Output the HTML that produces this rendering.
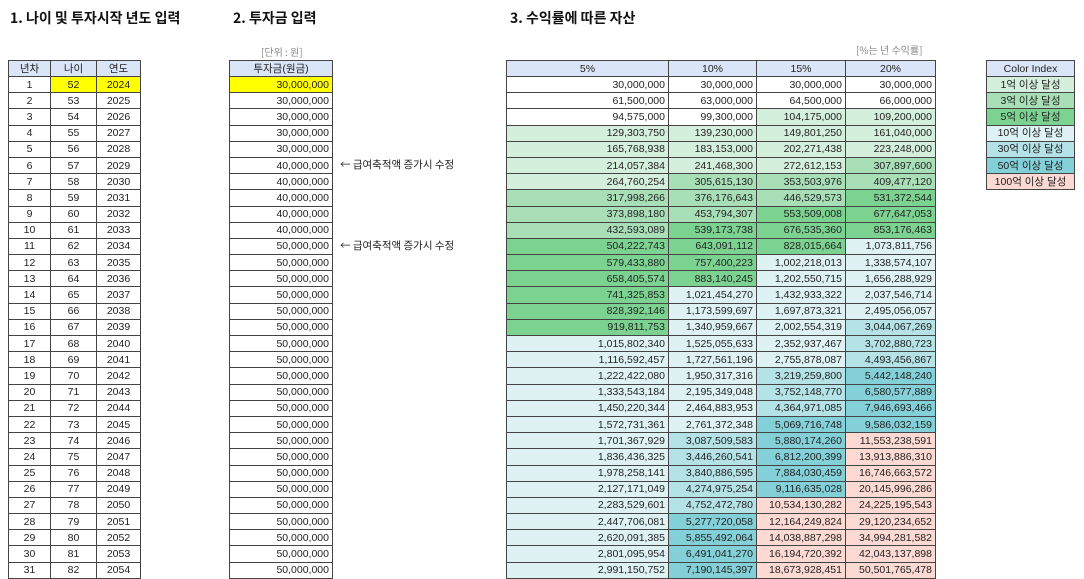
<!DOCTYPE html>
<html><head><meta charset="utf-8">
<style>
*{margin:0;padding:0;box-sizing:border-box}
body{width:1084px;height:578px;background:#fff;position:relative;overflow:hidden;font-family:"Liberation Sans","Noto Sans CJK KR",sans-serif;color:#222}
.t{position:absolute;font-size:14px;font-weight:bold;top:8px;color:#111;font-family:"Noto Sans CJK KR",sans-serif}
.g{position:absolute;font-size:10px;color:#888;font-family:"Noto Sans CJK KR",sans-serif}
.n{position:absolute;font-size:10.5px;color:#222;font-family:"Noto Sans CJK KR",sans-serif}
table{position:absolute;border-collapse:collapse;font-size:10.5px;table-layout:fixed}
td{border:1px solid #444;height:16.2px;padding:0 3px;white-space:nowrap;line-height:14px;text-align:right;overflow:hidden}
tr.h td{background:#dae6f8;text-align:center;height:16px;font-family:"Liberation Sans","Noto Sans CJK KR",sans-serif}
.c td{text-align:center}
.y{background:#ffff00}
.a{background:#d4efdb}.b{background:#a9dfb7}.d{background:#7cd391}
.e{background:#def2f4}.f{background:#b4e2e6}.k{background:#84d0d8}.p{background:#fcd9d3}
</style></head><body>
<div class="t" style="left:10px">1. 나이 및 투자시작 년도 입력</div>
<div class="t" style="left:233px">2. 투자금 입력</div>
<div class="t" style="left:510px">3. 수익률에 따른 자산</div>
<div class="g" style="left:261px;top:44px">[단위 : 원]</div>
<div class="g" style="left:856px;top:42px">[%는 년 수익률]</div>
<div class="n" style="left:340px;top:157px">← 급여축적액 증가시 수정</div>
<div class="n" style="left:340px;top:238px">← 급여축적액 증가시 수정</div>

<table class="c" style="left:8px;top:60px;width:132px">
<col style="width:42px"><col style="width:46px"><col style="width:44px">
<tr class="h"><td>년차</td><td>나이</td><td>연도</td></tr>
<tr><td>1</td><td class="y">52</td><td class="y">2024</td></tr>
<tr><td>2</td><td>53</td><td>2025</td></tr><tr><td>3</td><td>54</td><td>2026</td></tr>
<tr><td>4</td><td>55</td><td>2027</td></tr><tr><td>5</td><td>56</td><td>2028</td></tr>
<tr><td>6</td><td>57</td><td>2029</td></tr><tr><td>7</td><td>58</td><td>2030</td></tr>
<tr><td>8</td><td>59</td><td>2031</td></tr><tr><td>9</td><td>60</td><td>2032</td></tr>
<tr><td>10</td><td>61</td><td>2033</td></tr><tr><td>11</td><td>62</td><td>2034</td></tr>
<tr><td>12</td><td>63</td><td>2035</td></tr><tr><td>13</td><td>64</td><td>2036</td></tr>
<tr><td>14</td><td>65</td><td>2037</td></tr><tr><td>15</td><td>66</td><td>2038</td></tr>
<tr><td>16</td><td>67</td><td>2039</td></tr><tr><td>17</td><td>68</td><td>2040</td></tr>
<tr><td>18</td><td>69</td><td>2041</td></tr><tr><td>19</td><td>70</td><td>2042</td></tr>
<tr><td>20</td><td>71</td><td>2043</td></tr><tr><td>21</td><td>72</td><td>2044</td></tr>
<tr><td>22</td><td>73</td><td>2045</td></tr><tr><td>23</td><td>74</td><td>2046</td></tr>
<tr><td>24</td><td>75</td><td>2047</td></tr><tr><td>25</td><td>76</td><td>2048</td></tr>
<tr><td>26</td><td>77</td><td>2049</td></tr><tr><td>27</td><td>78</td><td>2050</td></tr>
<tr><td>28</td><td>79</td><td>2051</td></tr><tr><td>29</td><td>80</td><td>2052</td></tr>
<tr><td>30</td><td>81</td><td>2053</td></tr><tr><td>31</td><td>82</td><td>2054</td></tr>
</table>

<table style="left:229px;top:60px;width:104px">
<tr class="h"><td>투자금(원금)</td></tr>
<tr><td class="y">30,000,000</td></tr>
<tr><td>30,000,000</td></tr><tr><td>30,000,000</td></tr><tr><td>30,000,000</td></tr><tr><td>30,000,000</td></tr>
<tr><td>40,000,000</td></tr><tr><td>40,000,000</td></tr><tr><td>40,000,000</td></tr><tr><td>40,000,000</td></tr><tr><td>40,000,000</td></tr>
<tr><td>50,000,000</td></tr><tr><td>50,000,000</td></tr><tr><td>50,000,000</td></tr><tr><td>50,000,000</td></tr><tr><td>50,000,000</td></tr>
<tr><td>50,000,000</td></tr><tr><td>50,000,000</td></tr><tr><td>50,000,000</td></tr><tr><td>50,000,000</td></tr><tr><td>50,000,000</td></tr>
<tr><td>50,000,000</td></tr><tr><td>50,000,000</td></tr><tr><td>50,000,000</td></tr><tr><td>50,000,000</td></tr><tr><td>50,000,000</td></tr>
<tr><td>50,000,000</td></tr><tr><td>50,000,000</td></tr><tr><td>50,000,000</td></tr><tr><td>50,000,000</td></tr><tr><td>50,000,000</td></tr>
<tr><td>50,000,000</td></tr>
</table>

<table style="left:506px;top:60px;width:429px">
<col style="width:162px"><col style="width:88px"><col style="width:89px"><col style="width:90px">
<tr class="h"><td>5%</td><td>10%</td><td>15%</td><td>20%</td></tr>
<tr><td>30,000,000</td><td>30,000,000</td><td>30,000,000</td><td>30,000,000</td></tr>
<tr><td>61,500,000</td><td>63,000,000</td><td>64,500,000</td><td>66,000,000</td></tr>
<tr><td>94,575,000</td><td>99,300,000</td><td class="a">104,175,000</td><td class="a">109,200,000</td></tr>
<tr><td class="a">129,303,750</td><td class="a">139,230,000</td><td class="a">149,801,250</td><td class="a">161,040,000</td></tr>
<tr><td class="a">165,768,938</td><td class="a">183,153,000</td><td class="a">202,271,438</td><td class="a">223,248,000</td></tr>
<tr><td class="a">214,057,384</td><td class="a">241,468,300</td><td class="a">272,612,153</td><td class="b">307,897,600</td></tr>
<tr><td class="a">264,760,254</td><td class="b">305,615,130</td><td class="b">353,503,976</td><td class="b">409,477,120</td></tr>
<tr><td class="b">317,998,266</td><td class="b">376,176,643</td><td class="b">446,529,573</td><td class="d">531,372,544</td></tr>
<tr><td class="b">373,898,180</td><td class="b">453,794,307</td><td class="d">553,509,008</td><td class="d">677,647,053</td></tr>
<tr><td class="b">432,593,089</td><td class="d">539,173,738</td><td class="d">676,535,360</td><td class="d">853,176,463</td></tr>
<tr><td class="d">504,222,743</td><td class="d">643,091,112</td><td class="d">828,015,664</td><td class="e">1,073,811,756</td></tr>
<tr><td class="d">579,433,880</td><td class="d">757,400,223</td><td class="e">1,002,218,013</td><td class="e">1,338,574,107</td></tr>
<tr><td class="d">658,405,574</td><td class="d">883,140,245</td><td class="e">1,202,550,715</td><td class="e">1,656,288,929</td></tr>
<tr><td class="d">741,325,853</td><td class="e">1,021,454,270</td><td class="e">1,432,933,322</td><td class="e">2,037,546,714</td></tr>
<tr><td class="d">828,392,146</td><td class="e">1,173,599,697</td><td class="e">1,697,873,321</td><td class="e">2,495,056,057</td></tr>
<tr><td class="d">919,811,753</td><td class="e">1,340,959,667</td><td class="e">2,002,554,319</td><td class="f">3,044,067,269</td></tr>
<tr><td class="e">1,015,802,340</td><td class="e">1,525,055,633</td><td class="e">2,352,937,467</td><td class="f">3,702,880,723</td></tr>
<tr><td class="e">1,116,592,457</td><td class="e">1,727,561,196</td><td class="e">2,755,878,087</td><td class="f">4,493,456,867</td></tr>
<tr><td class="e">1,222,422,080</td><td class="e">1,950,317,316</td><td class="f">3,219,259,800</td><td class="k">5,442,148,240</td></tr>
<tr><td class="e">1,333,543,184</td><td class="e">2,195,349,048</td><td class="f">3,752,148,770</td><td class="k">6,580,577,889</td></tr>
<tr><td class="e">1,450,220,344</td><td class="e">2,464,883,953</td><td class="f">4,364,971,085</td><td class="k">7,946,693,466</td></tr>
<tr><td class="e">1,572,731,361</td><td class="e">2,761,372,348</td><td class="k">5,069,716,748</td><td class="k">9,586,032,159</td></tr>
<tr><td class="e">1,701,367,929</td><td class="f">3,087,509,583</td><td class="k">5,880,174,260</td><td class="p">11,553,238,591</td></tr>
<tr><td class="e">1,836,436,325</td><td class="f">3,446,260,541</td><td class="k">6,812,200,399</td><td class="p">13,913,886,310</td></tr>
<tr><td class="e">1,978,258,141</td><td class="f">3,840,886,595</td><td class="k">7,884,030,459</td><td class="p">16,746,663,572</td></tr>
<tr><td class="e">2,127,171,049</td><td class="f">4,274,975,254</td><td class="k">9,116,635,028</td><td class="p">20,145,996,286</td></tr>
<tr><td class="e">2,283,529,601</td><td class="f">4,752,472,780</td><td class="p">10,534,130,282</td><td class="p">24,225,195,543</td></tr>
<tr><td class="e">2,447,706,081</td><td class="k">5,277,720,058</td><td class="p">12,164,249,824</td><td class="p">29,120,234,652</td></tr>
<tr><td class="e">2,620,091,385</td><td class="k">5,855,492,064</td><td class="p">14,038,887,298</td><td class="p">34,994,281,582</td></tr>
<tr><td class="e">2,801,095,954</td><td class="k">6,491,041,270</td><td class="p">16,194,720,392</td><td class="p">42,043,137,898</td></tr>
<tr><td class="e">2,991,150,752</td><td class="k">7,190,145,397</td><td class="p">18,673,928,451</td><td class="p">50,501,765,478</td></tr>
</table>

<table class="c" style="left:986px;top:60px;width:89px">
<tr class="h"><td>Color Index</td></tr>
<tr><td class="a">1억 이상 달성</td></tr>
<tr><td class="b">3억 이상 달성</td></tr>
<tr><td class="d">5억 이상 달성</td></tr>
<tr><td class="e">10억 이상 달성</td></tr>
<tr><td class="f">30억 이상 달성</td></tr>
<tr><td class="k">50억 이상 달성</td></tr>
<tr><td class="p">100억 이상 달성</td></tr>
</table>
</body></html>
